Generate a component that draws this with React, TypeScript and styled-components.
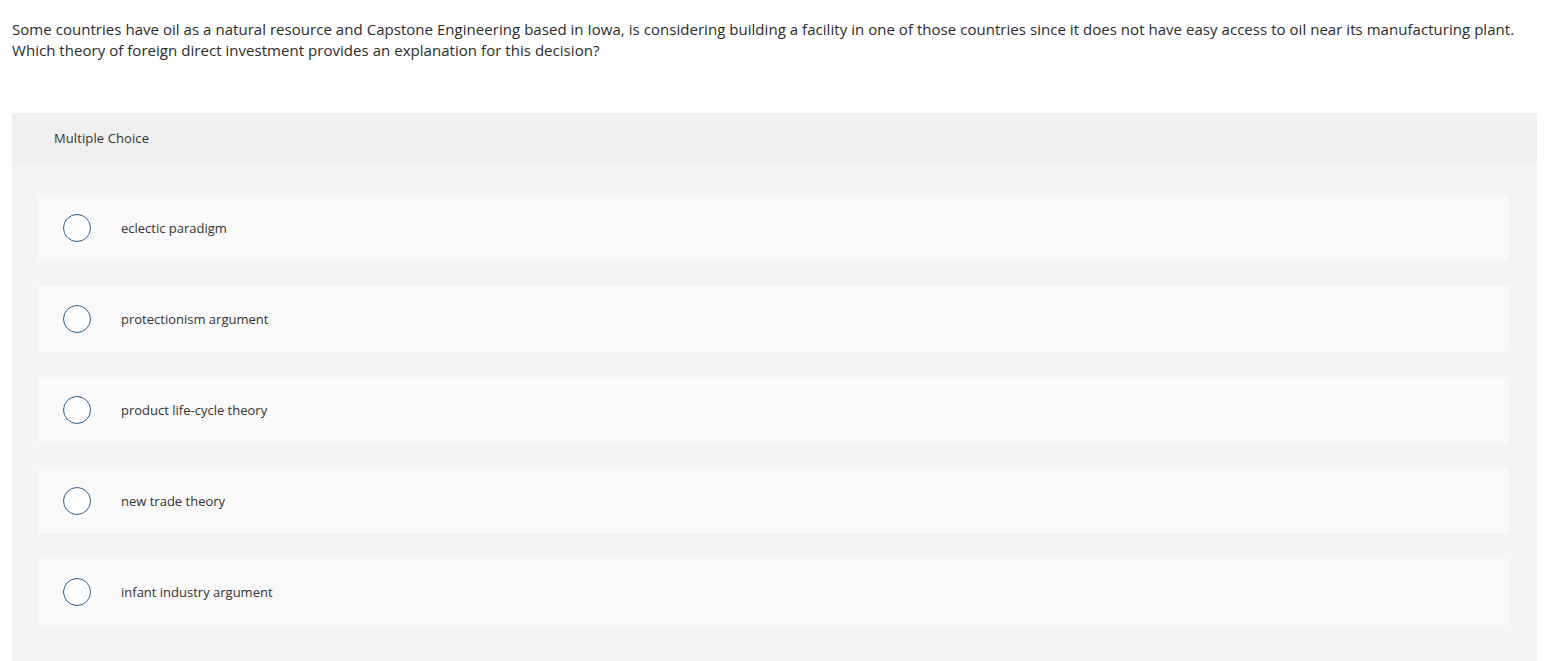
import React from "react";
import styled, { createGlobalStyle } from "styled-components";

const Global = createGlobalStyle`
  html, body { margin: 0; padding: 0; background: #fff; }
  body { font-family: "Open Sans", Lato, sans-serif; color: #333; }
`;

const Page = styled.div`
  padding: 19px 9px 0 12px;
`;

const Question = styled.p`
  margin: 0;
  font-size: 15px;
  line-height: 21px;
  letter-spacing: 0.04px;
  color: #2b2b2b;
`;

const Panel = styled.section`
  margin-top: 52px;
  background: #f4f4f4;
`;

const Header = styled.div`
  height: 50px;
  display: flex;
  align-items: center;
  padding-left: 42px;
  background: #f0f0f0;
  font-size: 13px;
  letter-spacing: 0.1px;
  color: #333;
`;

const Options = styled.div`
  display: flex;
  flex-direction: column;
  gap: 25px;
  padding: 32px 28px 40px 26px;
`;

const Option = styled.label`
  height: 66px;
  display: flex;
  align-items: center;
  padding-left: 25px;
  background: #fafafa;
  border-radius: 3px;
  cursor: pointer;
`;

const Radio = styled.span`
  width: 28px;
  height: 28px;
  box-sizing: border-box;
  border-radius: 50%;
  border: 1.5px solid #2e5f8e;
  background: #fff;
  flex: none;
`;

const OptionText = styled.span`
  margin-left: 30px;
  font-size: 13px;
  color: #333;
`;

const choices = [
  "eclectic paradigm",
  "protectionism argument",
  "product life-cycle theory",
  "new trade theory",
  "infant industry argument",
];

export default function App() {
  return (
    <>
      <Global />
      <Page>
        <Question>
          Some countries have oil as a natural resource and Capstone Engineering based in Iowa, is considering building a facility in one of those countries since it does not have easy access to oil near its manufacturing plant.
          <br />
          Which theory of foreign direct investment provides an explanation for this decision?
        </Question>
        <Panel>
          <Header>Multiple Choice</Header>
          <Options>
            {choices.map((c) => (
              <Option key={c}>
                <Radio />
                <OptionText>{c}</OptionText>
              </Option>
            ))}
          </Options>
        </Panel>
      </Page>
    </>
  );
}
